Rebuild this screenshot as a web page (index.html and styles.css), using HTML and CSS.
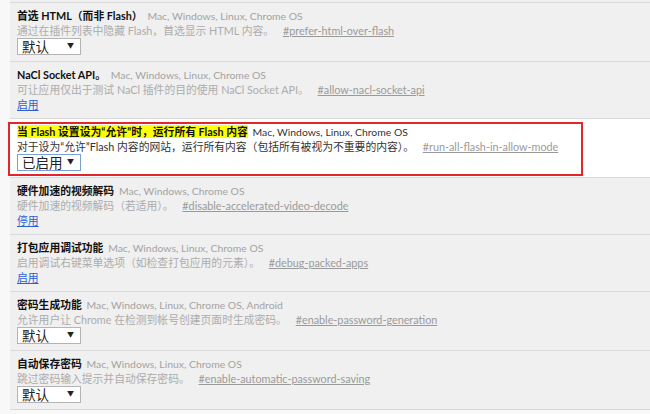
FILE: index.html
```html
<!DOCTYPE html>
<html lang="zh-CN">
<head>
  <meta charset="UTF-8">
  <title>实验性功能</title>
  <link rel="stylesheet" href="styles.css">
</head>
<body>

  <div class="flags">

    <div class="flag">
      <div class="flag-title"><span class="name">首选 HTML（而非 Flash）</span> <span class="platforms">Mac, Windows, Linux, Chrome OS</span></div>
      <div class="flag-desc">通过在插件列表中隐藏 Flash，首选显示 HTML 内容。 <a class="permalink" href="#">#prefer-html-over-flash</a></div>
      <div class="select"><span class="select-text">默认</span><span class="arrow">▼</span></div>
    </div>

    <div class="flag">
      <div class="flag-title"><span class="name">NaCl Socket API。</span> <span class="platforms">Mac, Windows, Linux, Chrome OS</span></div>
      <div class="flag-desc">可让应用仅出于测试 NaCl 插件的目的使用 NaCl Socket API。 <a class="permalink" href="#">#allow-nacl-socket-api</a></div>
      <div class="flag-action"><a class="toggle" href="#">启用</a></div>
    </div>

    <div class="flag highlight">
      <div class="annot"></div>
      <div class="flag-title"><span class="name marked">当 Flash 设置设为“允许”时，运行所有 Flash 内容</span> <span class="platforms">Mac, Windows, Linux, Chrome OS</span></div>
      <div class="flag-desc">对于设为“允许”Flash 内容的网站，运行所有内容（包括所有被视为不重要的内容）。 <a class="permalink" href="#">#run-all-flash-in-allow-mode</a></div>
      <div class="select active"><span class="select-text">已启用</span><span class="arrow">▼</span></div>
    </div>

    <div class="flag">
      <div class="flag-title"><span class="name">硬件加速的视频解码</span> <span class="platforms">Mac, Windows, Chrome OS</span></div>
      <div class="flag-desc">硬件加速的视频解码（若适用）。 <a class="permalink" href="#">#disable-accelerated-video-decode</a></div>
      <div class="flag-action"><a class="toggle" href="#">停用</a></div>
    </div>

    <div class="flag">
      <div class="flag-title"><span class="name">打包应用调试功能</span> <span class="platforms">Mac, Windows, Linux, Chrome OS</span></div>
      <div class="flag-desc">启用调试右键菜单选项（如检查打包应用的元素）。 <a class="permalink" href="#">#debug-packed-apps</a></div>
      <div class="flag-action"><a class="toggle" href="#">启用</a></div>
    </div>

    <div class="flag">
      <div class="flag-title"><span class="name">密码生成功能</span> <span class="platforms">Mac, Windows, Linux, Chrome OS, Android</span></div>
      <div class="flag-desc">允许用户让 Chrome 在检测到帐号创建页面时生成密码。 <a class="permalink" href="#">#enable-password-generation</a></div>
      <div class="select"><span class="select-text">默认</span><span class="arrow">▼</span></div>
    </div>

    <div class="flag">
      <div class="flag-title"><span class="name">自动保存密码</span> <span class="platforms">Mac, Windows, Linux, Chrome OS</span></div>
      <div class="flag-desc">跳过密码输入提示并自动保存密码。 <a class="permalink" href="#">#enable-automatic-password-saving</a></div>
      <div class="select"><span class="select-text">默认</span><span class="arrow">▼</span></div>
    </div>

  </div>

</body>
</html>
```

FILE: styles.css
```css
body {
  margin: 0;
  background-color: #f8f8f8;
  font-family: Lato, "Noto Sans CJK SC", sans-serif;
  font-size: 10.8px;
  overflow: hidden;
}

.flags {
  margin-left: 10px;
  padding-top: 2px;
  background-color: #f0f0f0;
}

.flag {
  border-top: 1px solid #d9d9d9;
  padding: 5px 0 6px 7px;
}

.flag:last-child {
  border-bottom: 1px solid #d9d9d9;
}

.flag-title,
.flag-desc,
.flag-action {
  line-height: 15px;
  height: 15px;
  white-space: nowrap;
}

.name {
  font-weight: bold;
  color: #111;
}

.platforms {
  color: #a3a3a3;
  font-size: 10.4px;
  margin-left: 2px;
}

.flag-desc {
  color: #acacac;
}

.permalink {
  color: #9a9a9a;
  margin-left: 6px;
}

.toggle {
  color: #2a5fd6;
}

.select {
  display: flex;
  align-items: center;
  box-sizing: border-box;
  width: 64px;
  height: 17px;
  background-color: #fff;
  border: 1px solid #b4b4b4;
  font-family: "Noto Sans CJK SC", sans-serif;
  font-size: 13.5px;
  color: #222;
  padding-left: 4px;
}

.select-text {
  flex: 1;
  line-height: 15px;
}

.arrow {
  font-size: 7px;
  line-height: 9px;
  margin-right: 6px;
  margin-top: -3px;
  color: #222;
}

/* the flag that has been singled out */

.highlight {
  position: relative;
  background-color: #fff;
}

.highlight .platforms,
.highlight .flag-desc {
  color: #333;
}

.marked {
  background-color: #ffff00;
}

.select.active {
  border-color: #7aa1d6;
}

.annot {
  position: absolute;
  left: -2px;
  top: 3px;
  box-sizing: border-box;
  width: 575px;
  height: 54px;
  border: 2px solid #e3262b;
}
```
